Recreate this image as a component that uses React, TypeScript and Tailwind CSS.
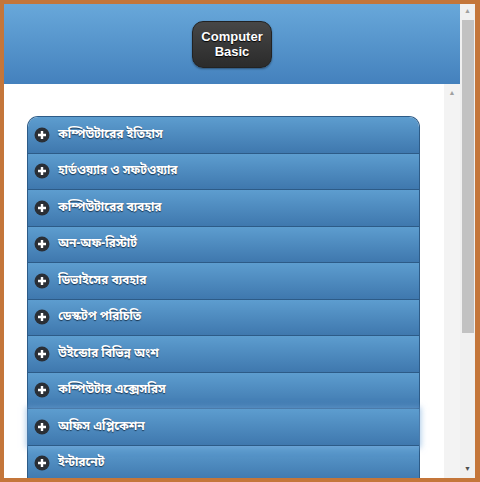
import React from 'react'

const topics = [
  'কম্পিউটারের ইতিহাস',
  'হার্ডওয়্যার ও সফটওয়্যার',
  'কম্পিউটারের ব্যবহার',
  'অন-অফ-রিস্টার্ট',
  'ডিভাইসের ব্যবহার',
  'ডেস্কটপ পরিচিতি',
  'উইন্ডোর বিভিন্ন অংশ',
  'কম্পিউটার এক্সেসরিস',
  'অফিস এপ্লিকেশন',
  'ইন্টারনেট',
]

function PlusIcon() {
  return (
    <svg width="16" height="16" viewBox="0 0 16 16" className="shrink-0">
      <circle cx="8" cy="8" r="7.5" fill="#2a2f36" />
      <path d="M8 4v8M4 8h8" stroke="#fff" strokeWidth="2.4" />
    </svg>
  )
}

function Topic({ title, first, focused }: { title: string; first?: boolean; focused?: boolean }) {
  return (
    <div
      className={
        'flex h-[36.5px] items-center gap-[8px] border-b border-[#2d5b87] bg-gradient-to-b from-[#5d9dcf] to-[#3f78ae] pl-[6px] ' +
        (first ? 'rounded-t-[10px] ' : '') +
        (focused ? 'relative z-10 shadow-[0_0_6px_2px_rgba(120,170,220,0.6)]' : '')
      }
    >
      <PlusIcon />
      <span className="text-[12px] font-bold text-white [text-shadow:0_1px_1px_#1a3550]">{title}</span>
    </div>
  )
}

export default function App() {
  return (
    <div
      className="flex h-[482px] w-[480px] bg-[#c4763a] p-[4px] pr-[5px]"
      style={{ fontFamily: '"Noto Sans Bengali", "Noto Sans", "Liberation Sans", sans-serif' }}
    >
      <div className="flex min-w-0 flex-1 flex-col">
        <div className="flex h-[80px] shrink-0 items-center justify-center bg-gradient-to-b from-[#68a8da] to-[#4481bd]">
          <div className="flex h-[47px] w-[80px] flex-col items-center justify-center rounded-[11px] border border-[#222] bg-gradient-to-b from-[#474747] to-[#2b2b2b] text-center text-[13px] font-bold leading-[15px] text-white shadow-[0_1px_2px_rgba(0,0,0,0.4)] [font-family:'Liberation_Sans',sans-serif] [text-shadow:0_1px_1px_#000]">
            <span>Computer</span>
            <span>Basic</span>
          </div>
        </div>
        <div className="flex min-h-0 flex-1 bg-white">
          <div className="min-w-0 flex-1 overflow-hidden pl-[23px] pr-[24px] pt-[32px]">
            <div className="rounded-t-[11px] border border-b-0 border-[#2d5b87]">
              {topics.map((t, i) => (
                <Topic key={t} title={t} first={i === 0} focused={i === 8} />
              ))}
            </div>
          </div>
          <div className="flex w-[16px] flex-col items-center bg-[#f3f3f3] pt-[6px]">
            <span className="text-[7px] leading-none text-[#a0a0a0]">▲</span>
          </div>
        </div>
      </div>
      <div className="flex w-[15px] flex-col items-center bg-[#f0f0f0] pt-[1px]">
        <div className="flex h-[15px] items-center justify-center text-[7px] text-[#a0a0a0]">▲</div>
        <div className="h-[313px] w-[12px] bg-[#c2c2c2]"></div>
        <div className="flex-1"></div>
        <div className="flex h-[15px] items-center justify-center text-[7px] text-[#505050]">▼</div>
      </div>
    </div>
  )
}
